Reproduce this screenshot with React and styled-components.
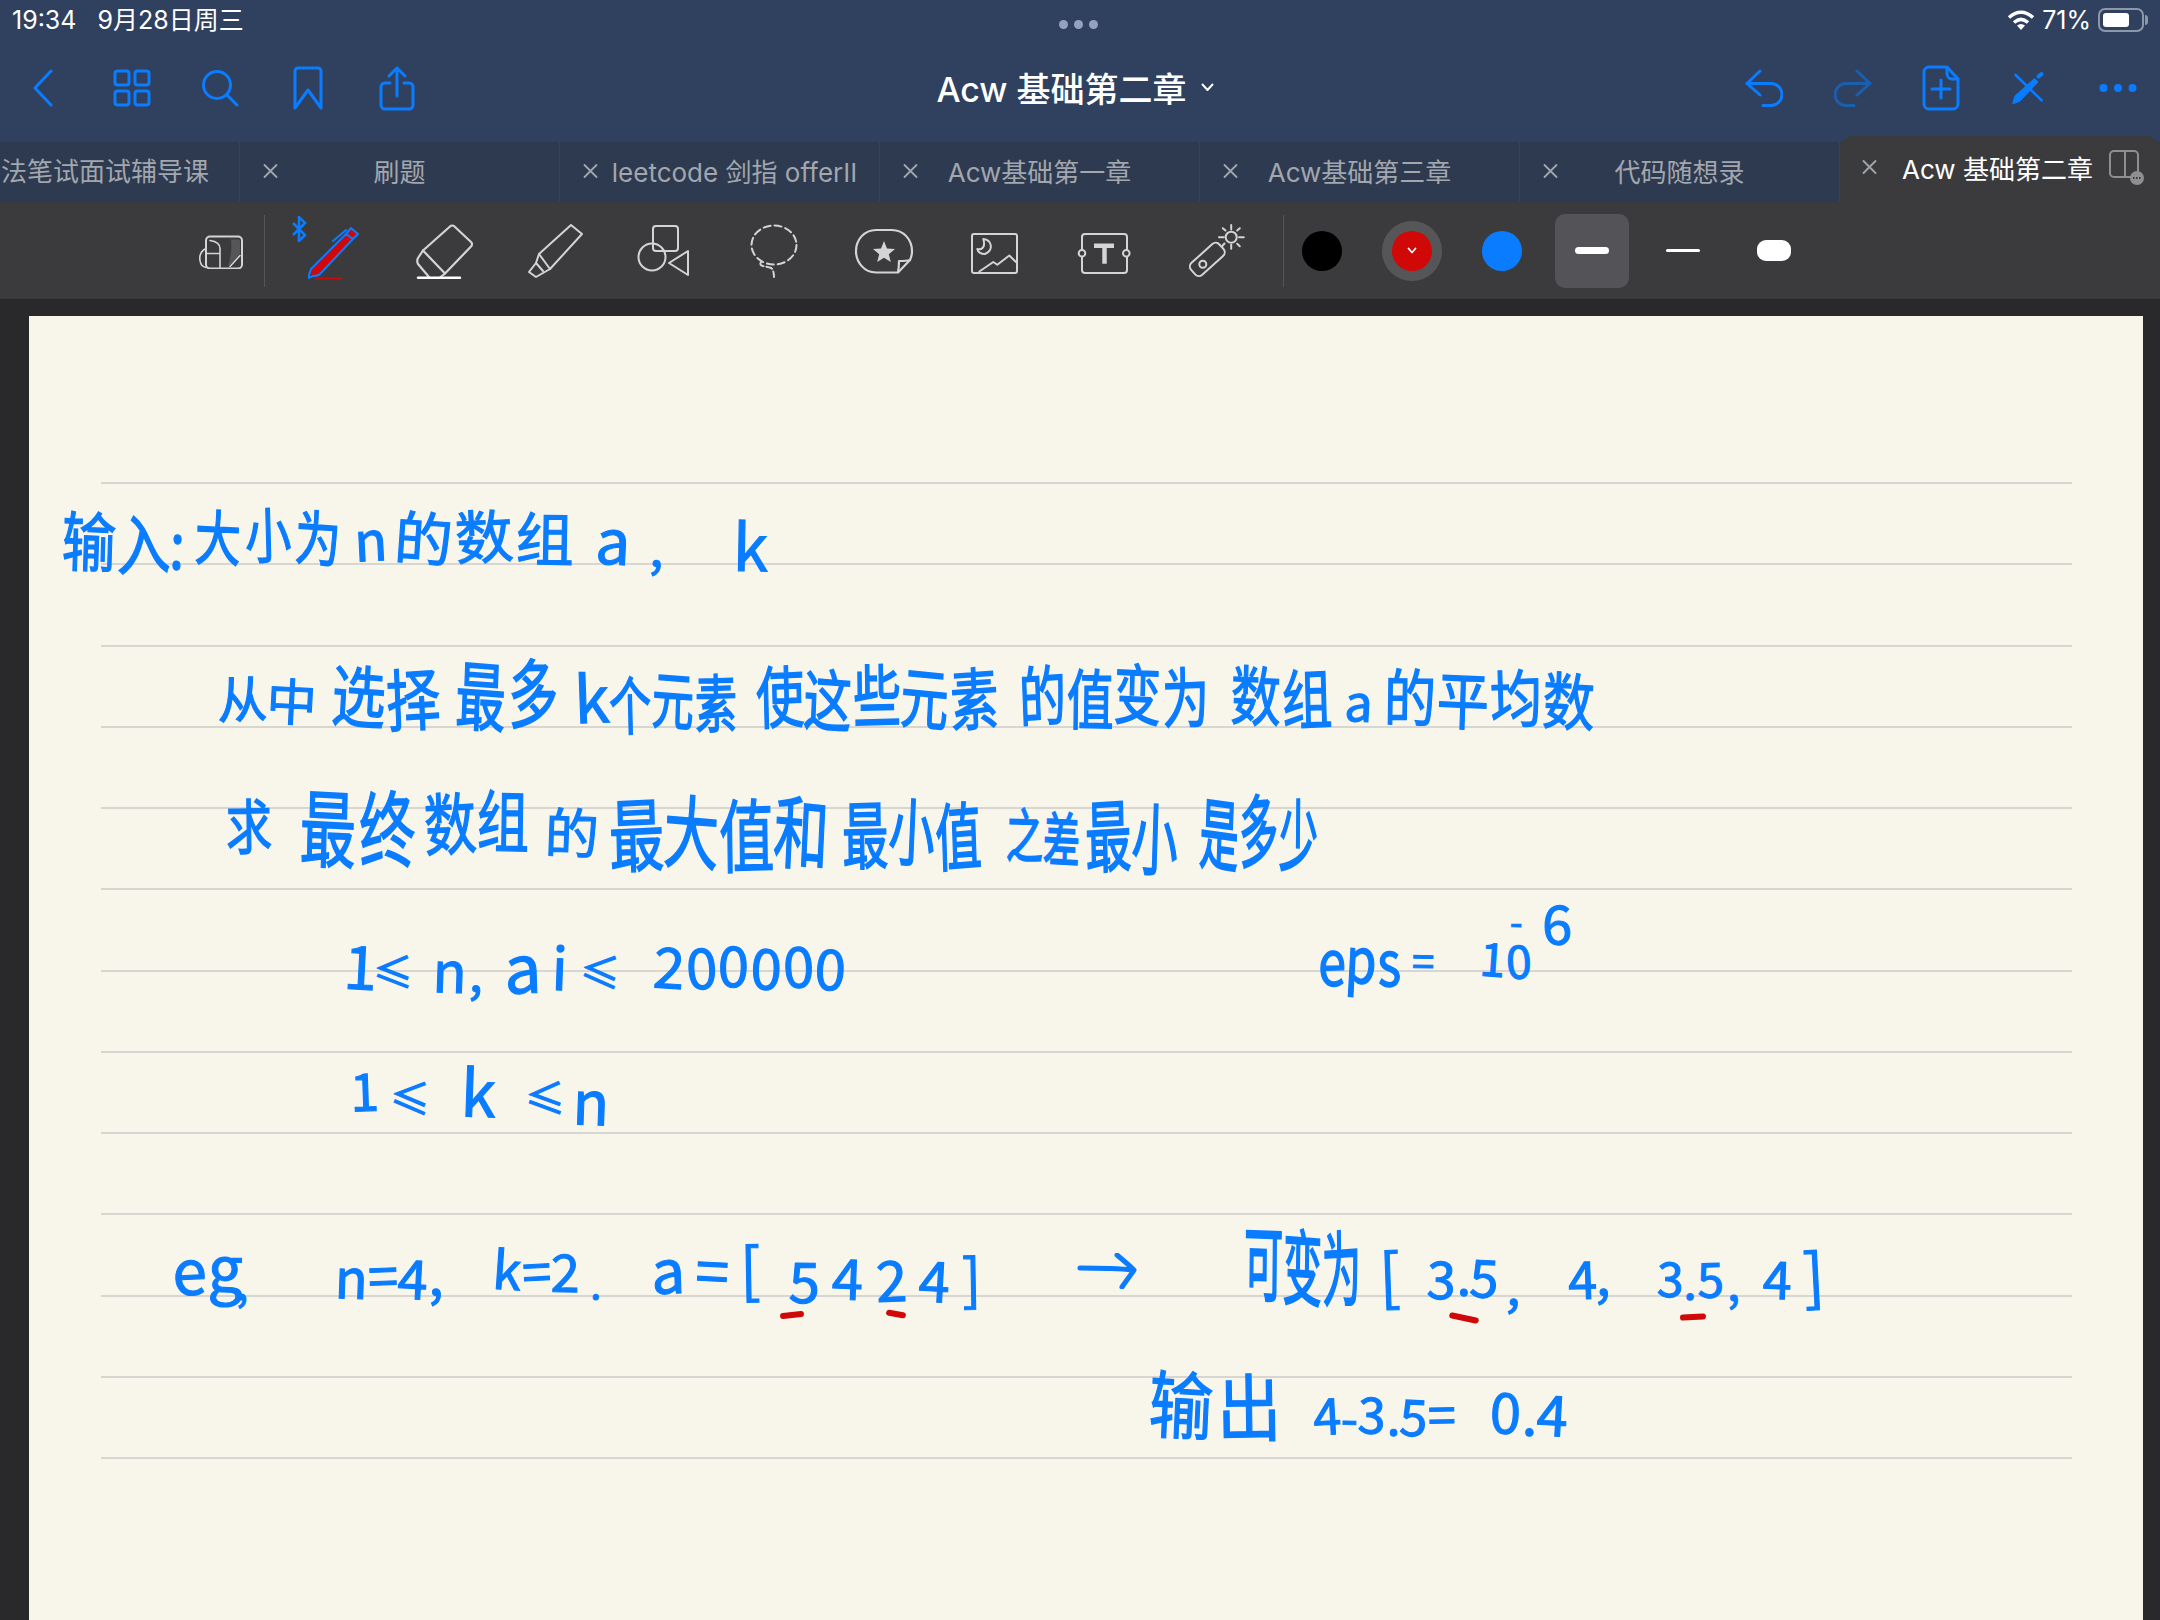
import React from "react";
import styled, { createGlobalStyle } from "styled-components";

const BLUE = "#0a7cff";
const GREY = "#d4d4d4";
const SANS = `Inter, "Noto Sans CJK SC", sans-serif`;

const Global = createGlobalStyle`
  html, body {
    margin: 0;
    background: #29292b;
    overflow: hidden;
  }
  * { box-sizing: border-box; }
`;

const Page = styled.div`
  width: 2160px;
  height: 1620px;
  display: flex;
  flex-direction: column;
  overflow: hidden;
  background: #29292b;
  font-family: ${SANS};
`;

const Header = styled.header`
  background: #30415f;
`;

const StatusBar = styled.div`
  height: 40px;
  padding: 0 16px 0 12px;
  display: grid;
  grid-template-columns: 1fr auto 1fr;
  align-items: center;
  color: #fff;
  font-size: 25px;
`;

const StatusLeft = styled.div`
  display: flex;
  align-items: center;
  gap: 21px;
  line-height: 30px;
`;

const StatusRight = styled.div`
  display: flex;
  justify-content: flex-end;
  align-items: center;
  gap: 7px;
`;

const Dots = styled.div`
  display: flex;
  gap: 6px;
  margin-top: 8px;
`;

const Dot = styled.span`
  width: 9px;
  height: 9px;
  border-radius: 50%;
  background: #93a3bf;
`;

const Battery = styled.div`
  width: 46px;
  height: 24px;
  padding: 3px;
  border: 2px solid #8c97a8;
  border-radius: 7px;
  position: relative;

  &::before {
    content: "";
    display: block;
    width: 71%;
    height: 100%;
    background: #fff;
    border-radius: 3px;
  }

  &::after {
    content: "";
    position: absolute;
    right: -6px;
    top: 5px;
    width: 3px;
    height: 10px;
    border-radius: 0 3px 3px 0;
    background: #8c97a8;
  }
`;

const Nav = styled.div`
  height: 102px;
  padding-bottom: 6px;
  display: grid;
  grid-template-columns: 1fr auto 1fr;
  align-items: center;
`;

const NavGroup = styled.div`
  display: flex;
  justify-content: ${(p) => (p.$right ? "flex-end" : "flex-start")};
  margin: ${(p) => (p.$right ? "0 -2px 0 0" : "0 0 0 -1px")};
`;

const NavSlot = styled.div`
  width: 88.4px;
  display: flex;
  justify-content: center;
  align-items: center;
`;

const Title = styled.div`
  display: flex;
  align-items: center;
  gap: 14px;
  margin: -2px 10px 0 0;
  color: #fff;
  font-size: 34px;
  font-weight: 500;
`;

const Tabs = styled.div`
  height: 60px;
  display: flex;
  background: #2d3a50;
  position: relative;
`;

const Tab = styled.div`
  flex: 0 0 ${(p) => p.$w || 320}px;
  min-width: 0;
  padding-bottom: 3px;
  display: grid;
  grid-template-columns: 50px minmax(0, 1fr) 50px;
  align-items: center;
  border-right: 1px solid #33435e;
  color: #a2a6ad;
  font-size: 26px;
`;

const ClippedTab = styled(Tab)`
  display: block;
  padding: 0 0 0 1px;
  line-height: 60px;
  overflow: hidden;
  white-space: nowrap;
`;

const ActiveTab = styled.div`
  flex: 0 0 320px;
  height: 66px;
  margin-top: -6px;
  padding: 0 14px 4px 22px;
  display: flex;
  align-items: center;
  border-radius: 14px 14px 0 0;
  background: #3b3b3d;
  color: #fff;
  font-size: 26px;
`;

const TabLabel = styled.span`
  justify-self: center;
  white-space: nowrap;
  margin-left: ${(p) => p.$nudge || 0}px;
`;

const ActiveLabel = styled.span`
  margin-left: 25px;
  white-space: nowrap;
  flex: 1;
`;

const Close = styled.svg`
  width: 15px;
  height: 16px;
  justify-self: end;
  margin-right: 12px;
  flex: none;
`;

const ActiveClose = styled(Close)`
  margin-right: 0;
`;

const Toolbar = styled.div`
  height: 97px;
  padding-left: 166px;
  display: flex;
  align-items: center;
  background: #3b3b3d;
`;

const ToolSlot = styled.div`
  width: ${(p) => p.$w || 110}px;
  height: 60px;
  padding-left: ${(p) => p.$pad || 0}px;
  flex: none;
  display: flex;
  align-items: center;
  justify-content: center;
  position: relative;
`;

const PenIcon = styled.svg`
  position: absolute;
  left: 29px;
  top: 6px;
`;

const BluetoothBadge = styled.svg`
  position: absolute;
  left: 12px;
  top: -5px;
`;

const Divider = styled.div`
  width: 1px;
  height: 72px;
  flex: none;
  margin: 0 ${(p) => p.$after}px 0 ${(p) => p.$before}px;
  background: #555557;
`;

const Swatches = styled.div`
  display: flex;
  gap: 50px;
  margin-right: 33px;
`;

const Swatch = styled.div`
  width: 40px;
  height: 40px;
  border-radius: 50%;
  background: ${(p) => p.$c};
  box-shadow: ${(p) => (p.$on ? "0 0 0 10px #565658" : "none")};
  display: flex;
  align-items: center;
  justify-content: center;
`;

const Strokes = styled.div`
  display: flex;
  gap: 17px;
`;

const StrokeBtn = styled.div`
  width: 74px;
  height: 74px;
  border-radius: 10px;
  background: ${(p) => (p.$on ? "#545458" : "transparent")};
  display: flex;
  align-items: center;
  justify-content: center;
`;

const StrokeBar = styled.div`
  width: ${(p) => p.$w}px;
  height: ${(p) => p.$h}px;
  border-radius: ${(p) => Math.min(p.$h / 2, 9)}px;
  background: #fff;
`;

const Gutter = styled.div`
  height: 17px;
  flex: none;
`;

const Paper = styled.main`
  flex: 1;
  margin: 0 17px 0 29px;
  padding: 86.75px 71px 0 72px;
  background: #f8f6ea;
  position: relative;
`;

const Rule = styled.div`
  height: 81.25px;
  border-bottom: 2px solid #d7d6d1;
`;

const Run = styled.div`
  position: absolute;
  left: ${(p) => p.$x - 29}px;
  top: ${(p) => p.$y - 316}px;
  width: ${(p) => p.$w}px;
  display: flex;
  justify-content: space-between;
  color: ${BLUE};
  font-family: "Noto Sans CJK SC", sans-serif;
  font-size: ${(p) => p.$s}px;
  line-height: 1;
  white-space: pre;
  -webkit-text-stroke: 1.1px ${BLUE};
  transform: scaleY(${(p) => p.$sy || 1});
  transform-origin: top left;
`;

const Glyph = styled.span`
  display: inline-block;
  transform: rotate(${(p) => p.$r}deg) translateY(${(p) => p.$dy}px);
`;

const RedMark = styled.div`
  position: absolute;
  left: ${(p) => p.$x - 29}px;
  top: ${(p) => p.$y - 316}px;
  width: ${(p) => p.$w}px;
  height: 6px;
  border-radius: 3px;
  background: #d00808;
  transform: rotate(${(p) => p.$r}deg);
`;

const Arrow = styled.svg`
  position: absolute;
  left: ${1077 - 29}px;
  top: ${1253 - 316}px;
`;

// handwritten runs: text, left, right, top, font size, optional vertical stretch
const notes = [
  ["输入:", 62, 185, 508, 54, 1.2],
  ["大小为", 195, 341, 503, 46, 1.3],
  ["n", 354, 383, 510, 54],
  ["的数组", 395, 574, 505, 58],
  ["a", 596, 630, 505, 62],
  [",", 650, 664, 520, 50],
  ["k", 733, 768, 510, 64],

  ["从中", 217, 316, 672, 50],
  ["选择", 332, 440, 660, 54, 1.25],
  ["最多", 456, 558, 652, 50, 1.5],
  ["k", 574, 606, 661, 64],
  ["个元素", 609, 737, 668, 42, 1.5],
  ["使这些元素", 756, 998, 660, 48, 1.4],
  ["的值变为", 1019, 1209, 660, 47, 1.4],
  ["数组", 1231, 1332, 660, 50, 1.3],
  ["a", 1345, 1372, 673, 50],
  ["的平均数", 1384, 1595, 665, 52, 1.2],

  ["求", 226, 272, 795, 46, 1.3],
  ["最终", 300, 415, 782, 56, 1.5],
  ["数组", 424, 529, 785, 52, 1.3],
  ["的", 545, 599, 803, 54],
  ["最大值和", 609, 829, 790, 55, 1.45],
  ["最小值", 842, 981, 792, 46, 1.6],
  ["之差", 1006, 1080, 805, 37, 1.6],
  ["最小", 1085, 1178, 795, 46, 1.7],
  ["是多少", 1200, 1318, 790, 39, 2],

  ["1", 344, 378, 935, 60],
  ["≤", 373, 400, 950, 40],
  ["n", 433, 465, 939, 56],
  [",", 470, 484, 944, 50],
  ["a", 504, 540, 930, 66],
  ["i", 552, 568, 934, 58],
  ["≤", 580, 606, 950, 40],
  ["200000", 654, 846, 936, 56],
  ["eps", 1318, 1400, 925, 50, 1.25],
  ["=", 1412, 1434, 940, 40],
  ["10", 1480, 1532, 935, 46],
  ["-", 1510, 1530, 901, 36],
  ["6", 1542, 1572, 894, 54],

  ["1", 350, 380, 1064, 52],
  ["≤", 390, 415, 1076, 40],
  ["k", 461, 495, 1056, 64],
  ["≤", 525, 550, 1076, 40],
  ["n", 573, 608, 1067, 60],

  ["eg", 172, 243, 1235, 62],
  [",", 235, 248, 1260, 44],
  ["n=4,", 335, 441, 1247, 54],
  ["k=2", 493, 575, 1243, 52],
  [".", 590, 604, 1261, 40],
  ["a=[", 651, 760, 1237, 60],
  ["5424]", 789, 981, 1249, 56],

  ["可变为", 1244, 1361, 1222, 39, 2.1],
  ["[", 1379, 1402, 1240, 62],
  ["3.5", 1427, 1496, 1249, 52],
  [",", 1508, 1524, 1256, 50],
  ["4,", 1568, 1602, 1249, 52],
  ["3.5", 1657, 1720, 1253, 48],
  [",", 1726, 1740, 1256, 46],
  ["4", 1763, 1795, 1249, 52],
  ["]", 1803, 1824, 1240, 62],
  ["输出", 1149, 1281, 1365, 64, 1.15],
  ["4-3.5=", 1313, 1456, 1388, 50],
  ["0.4", 1490, 1568, 1383, 56],
];

const jitter = [-2, 3, -1, 4, -3, 1, 2];

const Hand = ({ text, x0, x1, y, size, sy }) => (
  <Run $x={x0} $y={y} $w={x1 - x0} $s={size} $sy={sy}>
    {[...text].map((ch, i) => (
      <Glyph key={i} $r={jitter[(i + x0) % 7]} $dy={jitter[(i + y) % 7] / 2}>
        {ch}
      </Glyph>
    ))}
  </Run>
);

const line = { fill: "none", strokeLinecap: "round", strokeLinejoin: "round" };

const NavIcon = ({ w, h, children, sw = 3, c = BLUE }) => (
  <svg width={w} height={h} viewBox={`0 0 ${w} ${h}`} stroke={c} strokeWidth={sw} {...line}>
    {children}
  </svg>
);

const ToolIcon = ({ w, h, children, sw = 2 }) => (
  <svg width={w} height={h} viewBox={`0 0 ${w} ${h}`} stroke={GREY} strokeWidth={sw} {...line}>
    {children}
  </svg>
);

const crossPath = "M1.5 2l12 12M13.5 2l-12 12";

const App = () => (
  <Page>
    <Global />
    <Header>
      <StatusBar>
        <StatusLeft>
          <span>19:34</span>
          <span>9月28日周三</span>
        </StatusLeft>
        <Dots>
          <Dot />
          <Dot />
          <Dot />
        </Dots>
        <StatusRight>
          <svg width="28" height="22" viewBox="0 0 28 22" fill="none" stroke="#fff" strokeWidth="3.4">
            <path d="M2 8.5C9.5 1.5 18.5 1.5 26 8.5" />
            <path d="M7 13.5c4.5-4 9.5-4 14 0" />
            <path d="M14 21l-4-4.5c2.5-2 5.500-2 8 0z" fill="#fff" stroke="none" />
          </svg>
          <span>71%</span>
          <Battery />
        </StatusRight>
      </StatusBar>
      <Nav>
        <NavGroup>
          <NavSlot>
            <NavIcon w={22} h={38}>
              <path d="M19 2L3 19l16 17" />
            </NavIcon>
          </NavSlot>
          <NavSlot>
            <NavIcon w={38} h={38}>
              <rect x="2" y="2" width="14" height="14" rx="2.500" />
              <rect x="22" y="2" width="14" height="14" rx="2.500" />
              <rect x="2" y="22" width="14" height="14" rx="2.500" />
              <rect x="22" y="22" width="14" height="14" rx="2.500" />
            </NavIcon>
          </NavSlot>
          <NavSlot>
            <NavIcon w={38} h={38}>
              <circle cx="16" cy="16" r="13.500" />
              <path d="M26 26l10 10" />
            </NavIcon>
          </NavSlot>
          <NavSlot>
            <NavIcon w={32} h={44}>
              <path d="M3 42V5a3 3 0 0 1 3-3h20a3 3 0 0 1 3 3v37L16 24z" />
            </NavIcon>
          </NavSlot>
          <NavSlot>
            <NavIcon w={36} h={46}>
              <path d="M18 3v28M10 11l8-8 8 8" />
              <path d="M11 18H6a4 4 0 0 0-4 4v18a4 4 0 0 0 4 4h24a4 4 0 0 0 4-4V22a4 4 0 0 0-4-4h-5" />
            </NavIcon>
          </NavSlot>
        </NavGroup>
        <Title>
          <span>Acw 基础第二章</span>
          <svg width="13" height="9" viewBox="0 0 13 9" fill="none" stroke="#fff" strokeWidth="2" strokeLinecap="round" strokeLinejoin="round">
            <path d="M1.500 1.500l5 5.500 5-5.500" />
          </svg>
        </Title>
        <NavGroup $right>
          <NavSlot>
            <NavIcon w={38} h={40}>
              <path d="M15 3L2 15.500 15 27" />
              <path d="M2 15.500h24a11 11 0 0 1 0 22h-8" />
            </NavIcon>
          </NavSlot>
          <NavSlot>
            <NavIcon w={38} h={40} c="#1a5fae">
              <path d="M23 3l13 12.500L23 27" />
              <path d="M36 15.500H12a11 11 0 0 0 0 22h8" />
            </NavIcon>
          </NavSlot>
          <NavSlot>
            <NavIcon w={38} h={46}>
              <path d="M25 2H7a5 5 0 0 0-5 5v32a5 5 0 0 0 5 5h24a5 5 0 0 0 5-5V14z" />
              <path d="M25 3v6a5 5 0 0 0 5 5h5" />
              <path d="M19 15v18M10 24h18" />
            </NavIcon>
          </NavSlot>
          <NavSlot>
            <NavIcon w={34} h={34} sw={2.6}>
              <path d="M3.600 4l26 25.300" />
              <path d="M26.500 5.500l3-2.500" strokeWidth="4" />
              <path d="M.8 32.500L3 25 22.500 7.500 26 11 8 30z" fill={BLUE} strokeWidth="1" />
            </NavIcon>
          </NavSlot>
          <NavSlot>
            <svg width="38" height="10" viewBox="0 0 38 10" fill={BLUE}>
              <circle cx="4.500" cy="5" r="4" />
              <circle cx="19" cy="5" r="4" />
              <circle cx="33.500" cy="5" r="4" />
            </svg>
          </NavSlot>
        </NavGroup>
      </Nav>
    </Header>

    <Tabs>
      <ClippedTab $w={240}>法笔试面试辅导课</ClippedTab>
      <Tab>
        <Close viewBox="0 0 15 16" stroke="#a2a6ad" strokeWidth="1.8" strokeLinecap="round">
          <path d={crossPath} />
        </Close>
        <TabLabel>刷题</TabLabel>
      </Tab>
      <Tab>
        <Close viewBox="0 0 15 16" stroke="#a2a6ad" strokeWidth="1.8" strokeLinecap="round">
          <path d={crossPath} />
        </Close>
        <TabLabel $nudge={30}>leetcode 剑指 offerII</TabLabel>
      </Tab>
      <Tab>
        <Close viewBox="0 0 15 16" stroke="#a2a6ad" strokeWidth="1.8" strokeLinecap="round">
          <path d={crossPath} />
        </Close>
        <TabLabel>Acw基础第一章</TabLabel>
      </Tab>
      <Tab>
        <Close viewBox="0 0 15 16" stroke="#a2a6ad" strokeWidth="1.8" strokeLinecap="round">
          <path d={crossPath} />
        </Close>
        <TabLabel>Acw基础第三章</TabLabel>
      </Tab>
      <Tab>
        <Close viewBox="0 0 15 16" stroke="#a2a6ad" strokeWidth="1.8" strokeLinecap="round">
          <path d={crossPath} />
        </Close>
        <TabLabel>代码随想录</TabLabel>
      </Tab>
      <ActiveTab>
        <ActiveClose viewBox="0 0 15 16" stroke="#a2a6ad" strokeWidth="1.8" strokeLinecap="round">
          <path d={crossPath} />
        </ActiveClose>
        <ActiveLabel>Acw 基础第二章</ActiveLabel>
        <svg width="38" height="38" viewBox="0 0 38 38" fill="none" stroke="#8f8f92" strokeWidth="2">
          <rect x="2" y="3" width="28" height="26" rx="4" />
          <path d="M17 3v26" />
          <circle cx="29" cy="30" r="7" fill="#8f8f92" stroke="none" />
          <path d="M25 30h8" stroke="#3b3b3d" strokeWidth="2" strokeDasharray="1.500 1.500" />
        </svg>
      </ActiveTab>
    </Tabs>

    <Toolbar>
      <ToolSlot $w={98} $pad={12}>
        <ToolIcon w={44} h={36}>
          <g transform="translate(0 2.500)">
            <path d="M32 4h7a2 2 0 0 1 2 2v12L30 30l-1 1C32 22 33 12 32 4z" fill="#565658" stroke="none" />
            <rect x="7" y="1" width="36" height="32" rx="4" />
            <path d="M11 5c7 1 10 4 10 8v19M8 18h13M7 13c-4 2-7 6-6 12 .5 4 3 6.500 6 7" strokeWidth="1.600" />
            <path d="M31 31l10-11" strokeWidth="1.600" />
          </g>
        </ToolIcon>
      </ToolSlot>
      <Divider $before={0} $after={14} />
      <ToolSlot>
        <PenIcon width="52" height="54" viewBox="0 0 52 54" fill="none">
          <path d="M3 42L38 7l7 5L12 47c-2 2-5 2-7 2-2-1-3-4-2-7z" fill="#d00808" />
          <path d="M38 7l5-6 7 6-5 5z" fill="#d00808" />
          <path d="M3 42L38 7l5-6 7 6-5 5L12 47c-2 2-5 2-7 2l-5 2 3-9zM38 7l7 5M25 14L38 3" stroke={BLUE} strokeWidth="2" strokeLinejoin="round" strokeLinecap="round" />
          <path d="M7 51.500h27" stroke="#d00808" strokeWidth="1.800" />
        </PenIcon>
        <BluetoothBadge width="16" height="26" viewBox="0 0 16 26" fill="none" stroke={BLUE} strokeWidth="2.500">
          <path d="M2 7l12 12-6 6V1l6 6L2 19" />
        </BluetoothBadge>
      </ToolSlot>
      <ToolSlot>
        <ToolIcon w={58} h={58} sw={2.200}>
          <path d="M35 4.500a3 3 0 0 1 4.500 0L56 20a3 3 0 0 1 0 4.500L30 51.500 8 28.500z" />
          <path d="M8 28.500L3 36c-1 2-1 4 0 6l11 13M30 51.500l-5 4" />
          <path d="M3 55.800h42" stroke="#fff" strokeWidth="2.400" />
        </ToolIcon>
      </ToolSlot>
      <ToolSlot $pad={4}>
        <ToolIcon w={56} h={54}>
          <path d="M43 1l11 9-32 35-14 8-7-5 7-9 3-9z" />
          <path d="M11 30l11 15M8 39l7 8" />
        </ToolIcon>
      </ToolSlot>
      <ToolSlot>
        <ToolIcon w={54} h={54}>
          <rect x="16" y="2" width="25" height="25" rx="3" />
          <circle cx="15" cy="33" r="13.500" />
          <path d="M51 27v24L32 39z" />
        </ToolIcon>
      </ToolSlot>
      <ToolSlot>
        <ToolIcon w={50} h={56}>
          <ellipse cx="25" cy="22" rx="22.500" ry="19.500" strokeDasharray="7 4" />
          <path d="M12 39c-3 5 6 4 10 6 2 1 3 5 3 9" strokeDasharray="6 3" />
        </ToolIcon>
      </ToolSlot>
      <ToolSlot>
        <ToolIcon w={60} h={46} sw={2.200}>
          <path d="M44 44.500H22C10 44.500 2 34 2 23S10 2 22 2h16c12 0 20 10 20 21 0 3-.5 6-2 9z" />
          <path d="M44 44c1-5 1-8 1-11 4 0 8 0 11-1" />
          <path d="M30 13l3 7.500 8 .5-6.200 5.200 2 7.800L30 29.700 23.200 34l2-7.800L19 21l8-.5z" fill={GREY} stroke="none" />
        </ToolIcon>
      </ToolSlot>
      <ToolSlot>
        <ToolIcon w={48} h={46}>
          <rect x="2" y="6" width="45" height="39" rx="2" />
          <path d="M9.300 43.500L23.300 34l4 2.800 12-9.300L46 34" />
          <path d="M13.300 11C22 12 24 22 15 26c-4 0-7-2-7.700-5C11 22 16 20 13.300 11z" />
        </ToolIcon>
      </ToolSlot>
      <ToolSlot>
        <ToolIcon w={54} h={46}>
          <path d="M5 21v-12a3 3 0 0 1 3-3h39a3 3 0 0 1 3 3v12M50 29v13a3 3 0 0 1-3 3H8a3 3 0 0 1-3-3V29" />
          <circle cx="5" cy="25.200" r="3.300" />
          <circle cx="49.300" cy="25.200" r="3.300" />
          <path d="M17 17.800h20M27.500 17.800v18" strokeWidth="4.500" strokeLinecap="butt" />
        </ToolIcon>
      </ToolSlot>
      <ToolSlot $pad={5}>
        <ToolIcon w={56} h={56}>
          <rect x="-19" y="-8" width="38" height="16" rx="5" transform="translate(18.300 36.400) rotate(-42)" />
          <circle cx="13.800" cy="41.200" r="3.500" />
          <circle cx="42.200" cy="14.200" r="5.500" />
          <path d="M42.200 2v4.500M42.200 21.800v4M30 14.200h4.800M50 14.200h4.800M33.800 5.200l2.700 2.300M50.800 5.200l-2.600 2.300M48.200 20.800l2.600 2.400M33.200 23.200l2.300-2.700" />
        </ToolIcon>
      </ToolSlot>
      <Divider $before={14} $after={18} />
      <Swatches>
        <Swatch $c="#000" />
        <Swatch $c="#d00808" $on>
          <svg width="10" height="7" viewBox="0 0 10 7" fill="none" stroke="#fff" strokeWidth="1.800" strokeLinecap="round" strokeLinejoin="round">
            <path d="M1.500 1.500L5 5.500l3.500-4" />
          </svg>
        </Swatch>
        <Swatch $c="#0a7cff" />
      </Swatches>
      <Strokes>
        <StrokeBtn $on>
          <StrokeBar $w={34} $h={7} />
        </StrokeBtn>
        <StrokeBtn>
          <StrokeBar $w={34} $h={3} />
        </StrokeBtn>
        <StrokeBtn>
          <StrokeBar $w={34} $h={21} />
        </StrokeBtn>
      </Strokes>
    </Toolbar>

    <Gutter />

    <Paper>
      {Array.from({ length: 13 }, (_, i) => (
        <Rule key={i} />
      ))}
      {notes.map(([text, x0, x1, y, size, sy], i) => (
        <Hand key={i} text={text} x0={x0} x1={x1} y={y} size={size} sy={sy} />
      ))}
      <RedMark $x={780} $y={1312} $w={24} $r={-6} />
      <RedMark $x={886} $y={1311} $w={20} $r={10} />
      <RedMark $x={1449} $y={1315} $w={30} $r={12} />
      <RedMark $x={1680} $y={1314} $w={26} $r={-3} />
      <Arrow width="60" height="36" viewBox="0 0 60 36" fill="none" stroke={BLUE} strokeWidth="5" strokeLinecap="round" strokeLinejoin="round">
        <path d="M3 15c15 0 35 0 53 2M40 2c6 5 12 10 17 15-4 6-8 11-12 17" />
      </Arrow>
    </Paper>
  </Page>
);

export default App;
